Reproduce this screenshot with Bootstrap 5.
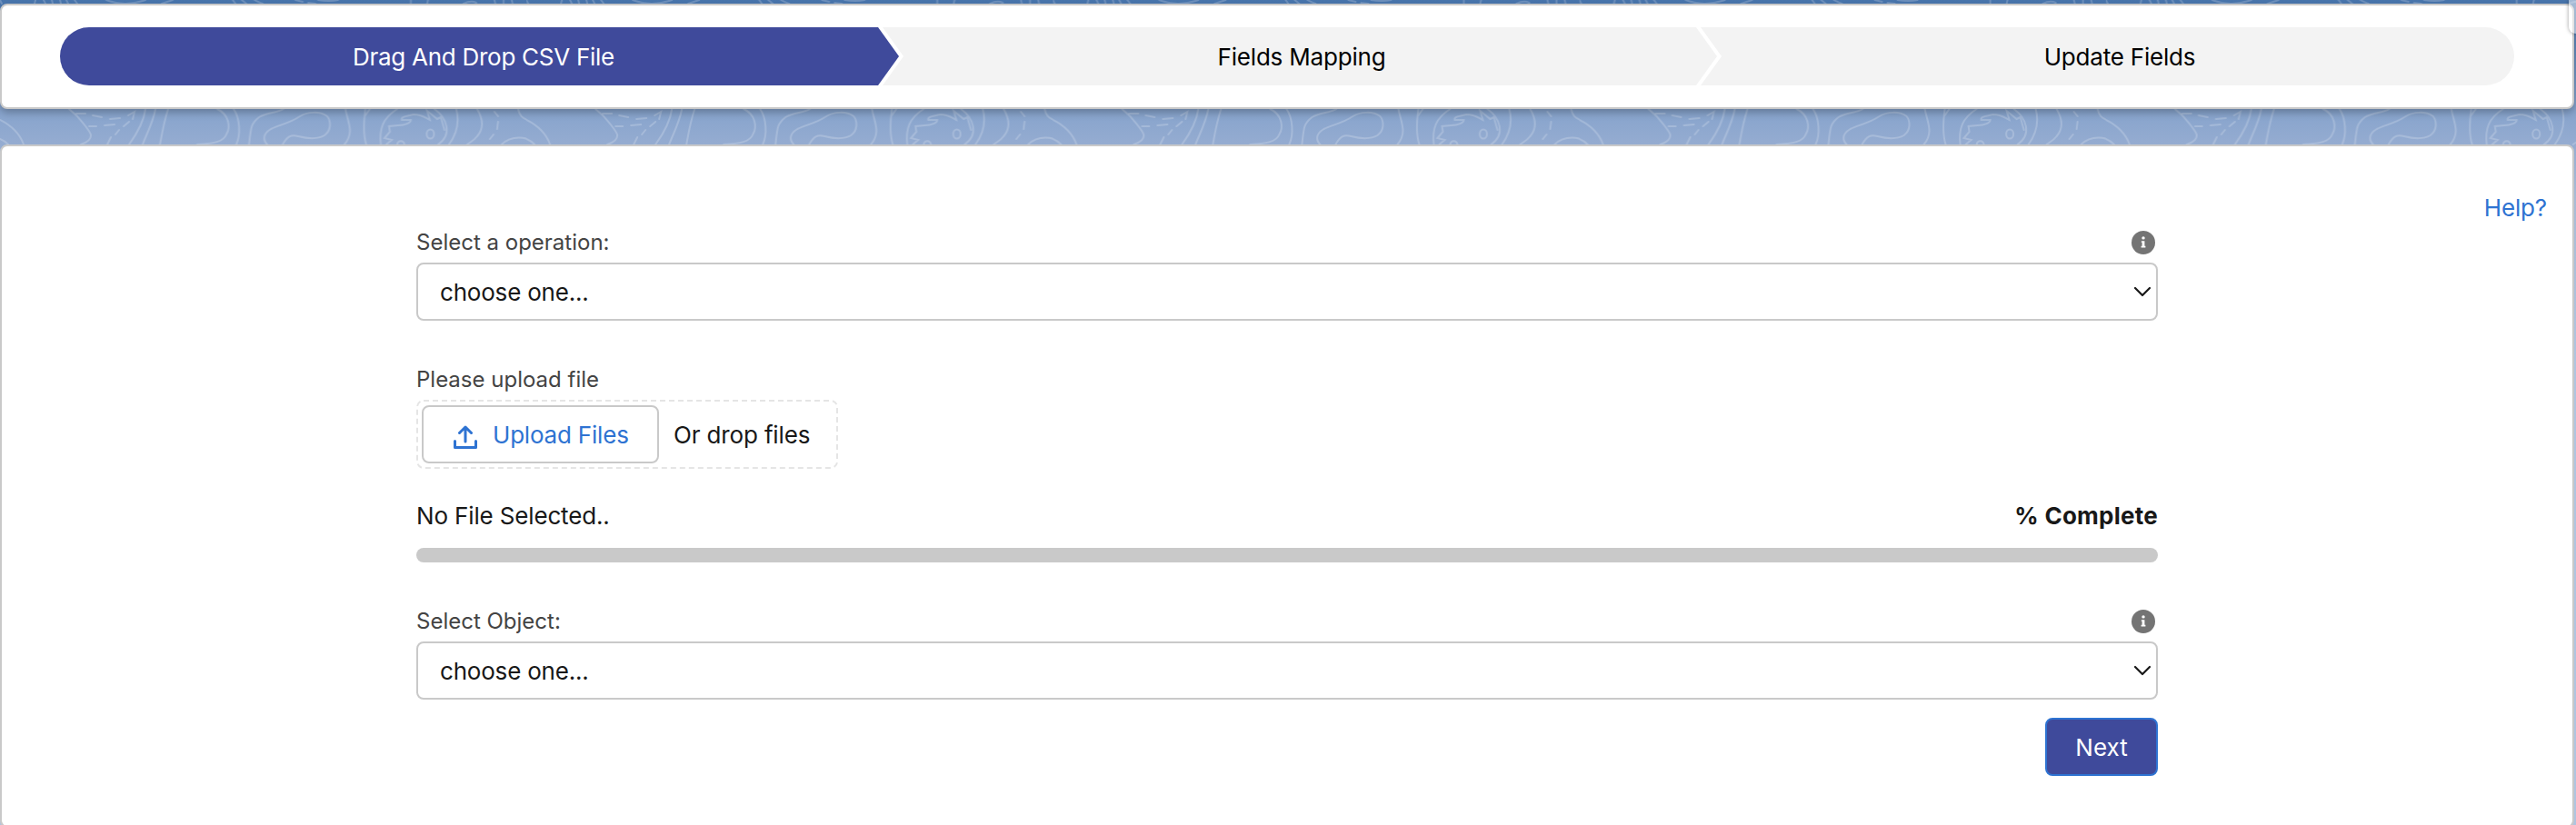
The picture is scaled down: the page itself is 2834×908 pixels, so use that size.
<!DOCTYPE html>
<html lang="en">
<head>
<meta charset="utf-8">
<title>CSV Import</title>
<link href="https://cdn.jsdelivr.net/npm/bootstrap@5.3.0/dist/css/bootstrap.min.css" rel="stylesheet">
<style>
  html { overflow: hidden; }
  body { position: relative; font-family: Inter, "Liberation Sans", sans-serif; font-size: 26px; line-height: 39px; letter-spacing: -.15px; color: #181818; height: 908px; overflow: hidden; padding-top: 4px;
    background: linear-gradient(#4875ad 0, #5a84b8 40px, #86a3cc 120px, #95acd1 159px, #a9bbd5 220px, #b0c4df 400px); }
  .backdrop { top: 0; left: 0; z-index: 0; }
  .panel { width: 2832px; border: 2px solid #c9c9c9; border-radius: 8px; background: #fff; position: relative; z-index: 1; }
  .panel-path { height: 116px; padding: 24px 64px; box-shadow: 0 4px 8px rgba(0,0,0,.25); }
  .panel-form { height: 752px; margin-top: 39px; padding-top: 48px; }
  .path-track { display: grid; grid-template-columns: repeat(3, 1fr); height: 64px; border-radius: 32px; overflow: hidden; color: #000; letter-spacing: -.2px; }
  .path-step { background: #f3f3f3; margin: 0 -23px 0 5px; padding: 0 23px 0 27px; clip-path: polygon(0 0, calc(100% - 23px) 0, 100% 50%, calc(100% - 23px) 100%, 0 100%, 23px 50%); }
  .path-step.current { background: #3f4a9b; color: #fff; margin-left: 0; padding-left: 32px; letter-spacing: -.27px; clip-path: polygon(0 0, calc(100% - 23px) 0, 100% 50%, calc(100% - 23px) 100%, 0 100%); }
  .path-step.final { margin-right: 0; padding-right: 0; clip-path: polygon(0 0, 100% 0, 100% 100%, 0 100%, 23px 50%); }
  .help { color: #2e73d2; height: 40px; padding-right: 28px; }
  .form-body { width: 1916px; margin-left: 456px; }
  .label-row { height: 40px; font-size: 24px; line-height: 36px; letter-spacing: 0; color: #444; }
  .label-row svg { margin: 5px 3px 0 0; }
  .picker { height: 64px; border: 2px solid #c9c9c9; border-radius: 8px; font-size: 26px; line-height: 39px; letter-spacing: -.2px; padding: 0 60px 0 24px; color: #181818; background-position: right 5px center; background-size: 20px 12px;
    background-image: url("data:image/svg+xml,%3Csvg xmlns='http://www.w3.org/2000/svg' viewBox='0 0 20 12'%3E%3Cpath d='M2 2l8 8 8-8' fill='none' stroke='%23181818' stroke-width='2.2' stroke-linecap='round' stroke-linejoin='round'/%3E%3C/svg%3E"); }
  .upload-label { margin-top: 47px; }
  .dropzone { width: 464px; height: 76px; padding-left: 6px; }
  .btn-upload { width: 261px; height: 64px; border: 2px solid #c9c9c9; border-radius: 8px; color: #2e73d2; font-size: 26px; line-height: 39px; letter-spacing: -.2px; padding: 0 0 0 33px; }
  .btn-upload svg { margin: 6px 17px 0 0; }
  .status { margin-top: 32px; height: 55px; }
  .percent { letter-spacing: .25px; }
  .bar { height: 16px; border-radius: 8px; background: #c9c9c9; margin-bottom: 47px; }
  .btn-next { width: 124px; height: 64px; margin-top: 20px; background: #3f4a9b; border: 2px solid #2e73d2; border-radius: 8px; color: #fff; font-size: 26px; line-height: 39px; padding: 0; }
  .scroll-thumb { top: 0; right: 0; width: 8px; height: 37px; z-index: 2; border-bottom-left-radius: 8px; background: rgba(255,255,255,.5); box-shadow: 0 0 4px rgba(0,0,0,.4); }
</style>
</head>
<body>
<svg class="backdrop position-absolute" width="2834" height="908" aria-hidden="true">
  <defs>
    <pattern id="topo" width="579.2" height="908" patternUnits="userSpaceOnUse">
      <g fill="none" stroke="#fff" stroke-opacity=".2" stroke-width="2" stroke-linecap="round">
        <path d="M39 0l-1 4M48 0l2 4M57 0l1 4M66 0l1 4M73 0l2 4M82 0l3 4M117 0Q137 8 160 0M178 4l12-4M256 0l3 4M266 0l5 4M280 0q5 3 9 4M325 0l8 2M339 3l8 1M350 0q12 2 22 0M452 0v4M471 0l-1 4M510 4q8-4 14-1M544 0l1 4M554 0v4M563 0l1 4M0 0l2 4"/>
        <path d="M0 132C12 138 22 148 26 159M0 153q5 2 9 6M76 120l9 8c7 8 15 17 15 21 0 5-5 8-11 10"/>
        <path d="M84 125h10M102 127l10 2M121 131l11-1M98 139h8M115 138l11-1M141 127l7-4-2 8M142 134l-6 5M131 143l-4 5M122 151l-4 8"/>
        <path d="M160 120c-2 15-10 28-18 39M171 120c-3 16-11 30-14 39M185 120c-5 15-7 28-9 39M239 120c13 6 15 20 10 28-3 8-14 10-32 11M257 120c7 10 8 28 3 39"/>
        <path d="M274 159c2-19 2-23 11-30 10-6 18-4 27-9M311 159c5-9 9-11 17-9 12 3 22 3 29-1 8-6 7-16 3-21-8-6-22-5-30 0-12 8-22 9-32 14-10 6-8 13-4 17M380 120c3 15 10 26-1 39M402 120c-2 15-2 30 1 39M407 120l-5 7"/>
        <path d="M437 120c-16 10-20 22-18 39M478 120c14 10 20 28 4 39M425 159l6-5-8-2 6-7-1-6 10-1c8 0 14-3 14-6l-10 0c-1-4 6-4 13-6 10 0 13 4 18 6l-3-10 11 9 4-2 4 14M437 159c1-5 7-5 8 0"/>
        <ellipse cx="473.500" cy="147.500" rx="4" ry="5"/>
        <path d="M502 120c4 15 0 28-8 39M525 120c7 12 7 22 0 30-4 5-7 6-11 9M544 123l4 5M548 134l-1 8M543 148l-4 5M552 159c10-10 28-10 38 0M570 120c2 9 6 10 10 12"/>
      </g>
    </pattern>
  </defs>
  <rect width="2834" height="908" fill="url(#topo)"/>
</svg>
<div class="scroll-thumb position-absolute"></div>

<header class="panel panel-path">
  <div class="path-track">
    <div class="path-step current d-flex align-items-center justify-content-center"><span>Drag And Drop CSV File</span></div>
    <div class="path-step d-flex align-items-center justify-content-center"><span>Fields Mapping</span></div>
    <div class="path-step final d-flex align-items-center justify-content-center"><span>Update Fields</span></div>
  </div>
</header>

<main class="panel panel-form">
  <div class="help d-flex justify-content-end"><span>Help?</span></div>
  <div class="form-body">
    <div class="label-row d-flex justify-content-between">
      <span>Select a operation:</span>
      <svg width="26" height="26" viewBox="0 0 26 26"><circle cx="13" cy="13" r="13" fill="#747474"/><circle cx="13" cy="7.900" r="1.700" fill="#fff"/><path d="M11 11.200h3.400v5.600h1v1.600h-4.800v-1.600h1v-4h-.9z" fill="#fff"/></svg>
    </div>
    <select class="form-select picker"><option>choose one...</option></select>

    <div class="label-row upload-label"><span>Please upload file</span></div>
    <div class="dropzone d-flex align-items-center position-relative">
      <svg class="position-absolute top-0 start-0" width="464" height="76"><rect x="1" y="1" width="462" height="74" rx="7" fill="none" stroke="#e5e5e5" stroke-width="2" stroke-dasharray="6 4"/></svg>
      <button class="btn btn-upload d-flex align-items-center position-relative">
        <svg width="26" height="26" viewBox="0 0 26 26" fill="none" stroke="#2e73d2" stroke-width="3" stroke-linecap="round" stroke-linejoin="round"><path d="M13 18V2.500M6.500 8.500L13 2l6.500 6.500"/><path d="M1.500 17.500v7h23v-7"/></svg>
        <span>Upload Files</span>
      </button>
      <span class="ms-3">Or drop files</span>
    </div>

    <div class="status d-flex justify-content-between"><span>No File Selected..</span><span class="percent fw-bold">% Complete</span></div>
    <div class="bar"></div>

    <div class="label-row d-flex justify-content-between">
      <span>Select Object:</span>
      <svg width="26" height="26" viewBox="0 0 26 26"><circle cx="13" cy="13" r="13" fill="#747474"/><circle cx="13" cy="7.900" r="1.700" fill="#fff"/><path d="M11 11.200h3.400v5.600h1v1.600h-4.800v-1.600h1v-4h-.9z" fill="#fff"/></svg>
    </div>
    <select class="form-select picker"><option>choose one...</option></select>
    <div class="d-flex justify-content-end"><button class="btn btn-next">Next</button></div>
  </div>
</main>
<script src="https://cdn.jsdelivr.net/npm/bootstrap@5.3.0/dist/js/bootstrap.bundle.min.js"></script>
</body>
</html>
